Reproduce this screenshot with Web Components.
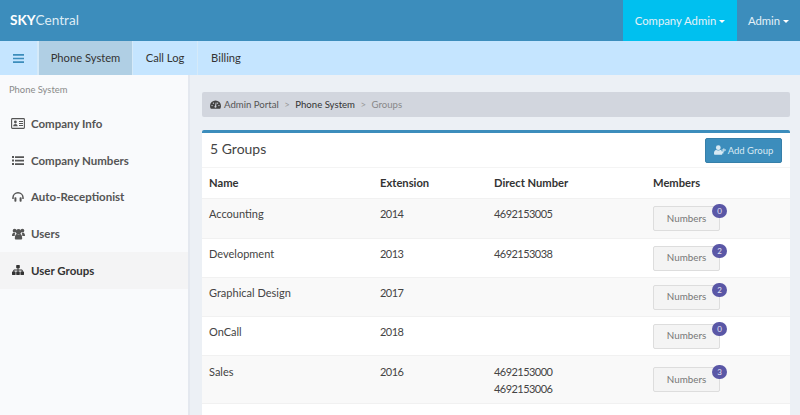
<!DOCTYPE html>
<html><head><meta charset="utf-8"><style>
html,body{margin:0;height:415px;overflow:hidden;background:#ecf0f5}
body{font-family:Lato,"Noto Sans",sans-serif;font-size:11px;color:#444}
</style></head><body>
<app-shell>
<top-bar slot="top"></top-bar>
<sub-nav slot="sub"></sub-nav>
<side-nav slot="side"></side-nav>
<div slot="main">
<bread-crumb></bread-crumb>
<groups-box>
<group-row name="Accounting" ext="2014" num="4692153005" count="0" style="height:39px"></group-row>
<group-row name="Development" ext="2013" num="4692153038" count="2" style="height:38px"></group-row>
<group-row name="Graphical Design" ext="2017" count="2" style="height:38px"></group-row>
<group-row name="OnCall" ext="2018" count="0" style="height:38px"></group-row>
<group-row name="Sales" ext="2016" num="4692153000|4692153006" count="3" style="height:47px;--pt:7px"></group-row>
</groups-box>
</div>
</app-shell>
<script>
const ICONS={
bars:'<svg viewBox="0 0 11 9" width="11" height="9"><path fill="#3c8dbc" d="M0 0h11v1.700H0zM0 3.650h11v1.700H0zM0 7.300h11V9H0z"/></svg>',
dash:'<svg viewBox="0 0 16 12" width="11" height="9"><path fill="currentColor" d="M8 0a8 8 0 0 0-8 8c0 1.600.4 3 1.200 4h13.600c.8-1 1.200-2.400 1.200-4a8 8 0 0 0-8-8zM3 8.600a1 1 0 1 1 0-2 1 1 0 0 1 0 2zm2-3.600a1 1 0 1 1 0-2 1 1 0 0 1 0 2zm3 5.800a1.600 1.600 0 0 1-.7-3L8.400 3h1l-.4 5a1.600 1.600 0 0 1-1 2.800zM11 5a1 1 0 1 1 0-2 1 1 0 0 1 0 2zm2 3.600a1 1 0 1 1 0-2 1 1 0 0 1 0 2z"/></svg>',
card:'<svg viewBox="0 0 14 11" width="14" height="11"><rect x=".6" y=".6" width="12.800" height="9.800" rx=".8" fill="none" stroke="currentColor" stroke-width="1.100"/><circle cx="4.400" cy="4" r="1.400" fill="currentColor"/><path fill="currentColor" d="M2.200 8.200c0-1.500 1-2.200 2.200-2.200s2.200.7 2.200 2.200z"/><path stroke="currentColor" d="M8 3.500h4M8 5.500h4M8 7.500h4"/></svg>',
list:'<svg viewBox="0 0 12 9" width="12" height="9"><path fill="currentColor" d="M0 0h2v2H0zM0 3.500h2v2H0zM0 7h2v2H0zM3 .2h9v1.700H3zM3 3.700h9v1.700H3zM3 7.200h9v1.700H3z"/></svg>',
head:'<svg viewBox="0 0 12 10" width="12" height="10"><path fill="none" stroke="currentColor" stroke-width="1.500" d="M1 7V5.500a5 4.700 0 0 1 10 0V7"/><rect x="2.400" y="5.200" width="2" height="4.600" rx=".8" fill="currentColor"/><rect x="7.600" y="5.200" width="2" height="4.600" rx=".8" fill="currentColor"/></svg>',
users:'<svg viewBox="0 0 13 11" width="13" height="12"><circle cx="2.600" cy="2.200" r="1.900" fill="currentColor"/><circle cx="10.400" cy="2.200" r="1.900" fill="currentColor"/><circle cx="6.500" cy="3.200" r="2.600" fill="currentColor"/><path fill="currentColor" d="M0 7.500c0-2.400.8-3.200 2-3.200.5 0 .8.200 1.200.4-.4.700-.5 1.700-.5 2.800zM13 7.500c0-2.400-.8-3.200-2-3.200-.5 0-.8.200-1.200.4.400.700.500 1.700.500 2.800zM3.700 11c-.5 0-.9-.3-.9-.9C2.800 7.500 3.500 5.500 5 5.500c.5.500 2.500.500 3 0 1.500 0 2.200 2 2.200 4.600 0 .6-.4.900-.9.900z"/></svg>',
site:'<svg viewBox="0 0 12 10" width="12" height="10"><g fill="currentColor"><rect x="4.200" width="3.600" height="3.200" rx=".4"/><rect y="6.500" width="3.600" height="3.500" rx=".4"/><rect x="4.200" y="6.500" width="3.600" height="3.500" rx=".4"/><rect x="8.400" y="6.500" width="3.600" height="3.500" rx=".4"/></g><path fill="none" stroke="currentColor" d="M6 3v4M1.800 7V5h8.400v2"/></svg>',
plus:'<svg viewBox="0 0 14 11" width="12" height="10"><circle cx="5" cy="2.800" r="2.800" fill="currentColor"/><path fill="currentColor" d="M0 9.500C0 7 1 5.500 2.600 5.500c.7.600 4 .6 4.800 0 .5 0 1 .2 1.300.5v1H11v2.500H9.500V11H1.200C.5 11 0 10.400 0 9.500zM11 3.500h1V5h2v1h-2v1.500h-1V6H9V5h2z"/></svg>'
};
const def=(n,html)=>customElements.define(n,class extends HTMLElement{connectedCallback(){if(this.shadowRoot)return;const r=this.attachShadow({mode:'open'});r.innerHTML=typeof html==='function'?html(this):html;}});

def('app-shell',`<style>
:host{display:grid;grid-template-columns:190px 1fr;grid-template-rows:41px 34px 340px;width:800px;height:415px;overflow:hidden}
.t{grid-column:1/3}.s{grid-column:1/3}
.side{background:#f9fafc;border-right:2px solid #e4e8ef}
.main{padding:17px 10px 0 12px;min-width:0}
</style><div class="t"><slot name="top"></slot></div><div class="s"><slot name="sub"></slot></div><div class="side"><slot name="side"></slot></div><div class="main"><slot name="main"></slot></div>`);

def('top-bar',`<style>
:host{display:flex;height:41px;background:#3c8dbc;color:#fff;align-items:stretch}
.logo{flex:1;padding-left:10px;font-size:13.600px;line-height:41px;color:#dcecf5}
b{color:#fff;font-weight:700}
.m{display:flex;align-items:center;gap:3px;color:#e4f1f8;font-size:11.300px}
.c{background:#00c0ef;width:114px;justify-content:center}
.a{width:63px;justify-content:center}
i{border-top:3.500px solid #fff;border-left:3.500px solid transparent;border-right:3.500px solid transparent;margin-top:2px}
</style><div class="logo"><b>SKY</b>Central</div><div class="m c"><span>Company Admin</span><i></i></div><div class="m a"><span>Admin</span><i></i></div>`);

def('sub-nav',`<style>
:host{display:flex;height:34px;background:#c5e5ff;color:#333;font-size:11.200px}
.b{width:38px;box-sizing:border-box;display:flex;padding:13px 0 0 13px;border-right:1px solid #d5eaf9}
.b svg{display:block}
.t{display:flex;align-items:center;justify-content:center;border-right:1px solid #d5eaf9;padding-bottom:1px;box-sizing:border-box}
.on{background:#b0cfe4;width:95px;border-left:1px solid #d5eaf9}
</style><div class="b">${ICONS.bars}</div><div class="t on">Phone System</div><div class="t" style="width:65px">Call Log</div><div class="t" style="width:56px;border:0">Billing</div>`);

def('nav-item',h=>`<style>
:host{display:flex;align-items:center;height:36.750px;padding-left:11px;gap:6px;font-weight:700;color:#555;font-size:11.500px}
:host([active]){background:#f4f4f5;color:#333}
.i{width:14px;display:flex;justify-content:center}
</style><span class="i">${ICONS[h.getAttribute('icon')]}</span><slot></slot>`);

def('side-nav',`<style>
:host{display:block}
.h{font-size:9.400px;color:#8a8a8a;padding:10px 0 0 9px;height:20px;line-height:10px}
</style><div class="h">Phone System</div>
<nav-item icon="card">Company Info</nav-item>
<nav-item icon="list">Company Numbers</nav-item>
<nav-item icon="head">Auto-Receptionist</nav-item>
<nav-item icon="users">Users</nav-item>
<nav-item icon="site" active>User Groups</nav-item>`);

def('bread-crumb',`<style>
:host{display:flex;align-items:center;height:25px;background:#d2d6de;border-radius:2px;padding-left:8px;font-size:9.600px;color:#555;margin-bottom:13px}
.s{color:#999;margin:0 5.500px}.d{color:#333}.l{color:#888}
svg{margin-right:3px;color:#444}
</style>${ICONS.dash}<span>Admin Portal</span><span class="s">&gt;</span><span class="d">Phone System</span><span class="s">&gt;</span><span class="l">Groups</span>`);

def('groups-box',`<style>
:host{display:block;background:#fff;border-top:3px solid #3c8dbc;border-radius:2px;height:285px}
.top{display:flex;justify-content:space-between;align-items:center;height:34px;padding:0 8px;border-bottom:1px solid #f4f4f4}
.ti{font-size:14px;color:#444;margin-bottom:3px}
button{all:unset;display:flex;align-items:center;gap:2px;height:25px;width:77px;justify-content:center;background:#3c8dbc;border:1px solid #367fa9;box-sizing:border-box;border-radius:2px;color:#d8e9f3;font:9.500px Lato,sans-serif}
.hd{display:grid;grid-template-columns:171px 114px 159px 1fr;padding:0 0 2px 7px;box-sizing:content-box;height:28px;align-items:center;font-weight:700;font-size:11.200px;color:#333;border-bottom:1px solid #f1f1f1}
::slotted(group-row:nth-of-type(odd)){background:#f9f9f9}
</style><div class="top"><span class="ti">5 Groups</span><button>${ICONS.plus}Add Group</button></div>
<div class="hd"><span>Name</span><span>Extension</span><span>Direct Number</span><span>Members</span></div><slot></slot>`);

def('group-row',h=>{const nums=(h.getAttribute('num')||'').split('|').map(x=>`<div>${x}</div>`).join('');return `<style>
:host{display:grid;grid-template-columns:171px 114px 159px 1fr;padding-left:7px;border-bottom:1px solid #f1f1f1;font-size:11px;line-height:17px;color:#444;box-sizing:content-box}
span,.n{padding-top:var(--pt,6px)}
.x,.n{letter-spacing:-.55px}
.w{position:relative;align-self:center;width:67px}
.btn{height:25px;box-sizing:border-box;border:1px solid #ddd;border-radius:2px;background:#f4f4f4;color:#777;font-size:9.800px;display:flex;align-items:center;justify-content:center;padding-bottom:1px}
.bd{position:absolute;left:59px;top:-2px;width:15px;height:14px;border-radius:8px;background:#5a57a6;color:#e6e6f4;font-size:8px;display:flex;align-items:center;justify-content:center;line-height:1}
</style><span>${h.getAttribute('name')}</span><span class="x">${h.getAttribute('ext')}</span><div class="n">${nums}</div><div class="w"><div class="btn">Numbers</div><div class="bd">${h.getAttribute('count')}</div></div>`});
</script>
</body></html>
